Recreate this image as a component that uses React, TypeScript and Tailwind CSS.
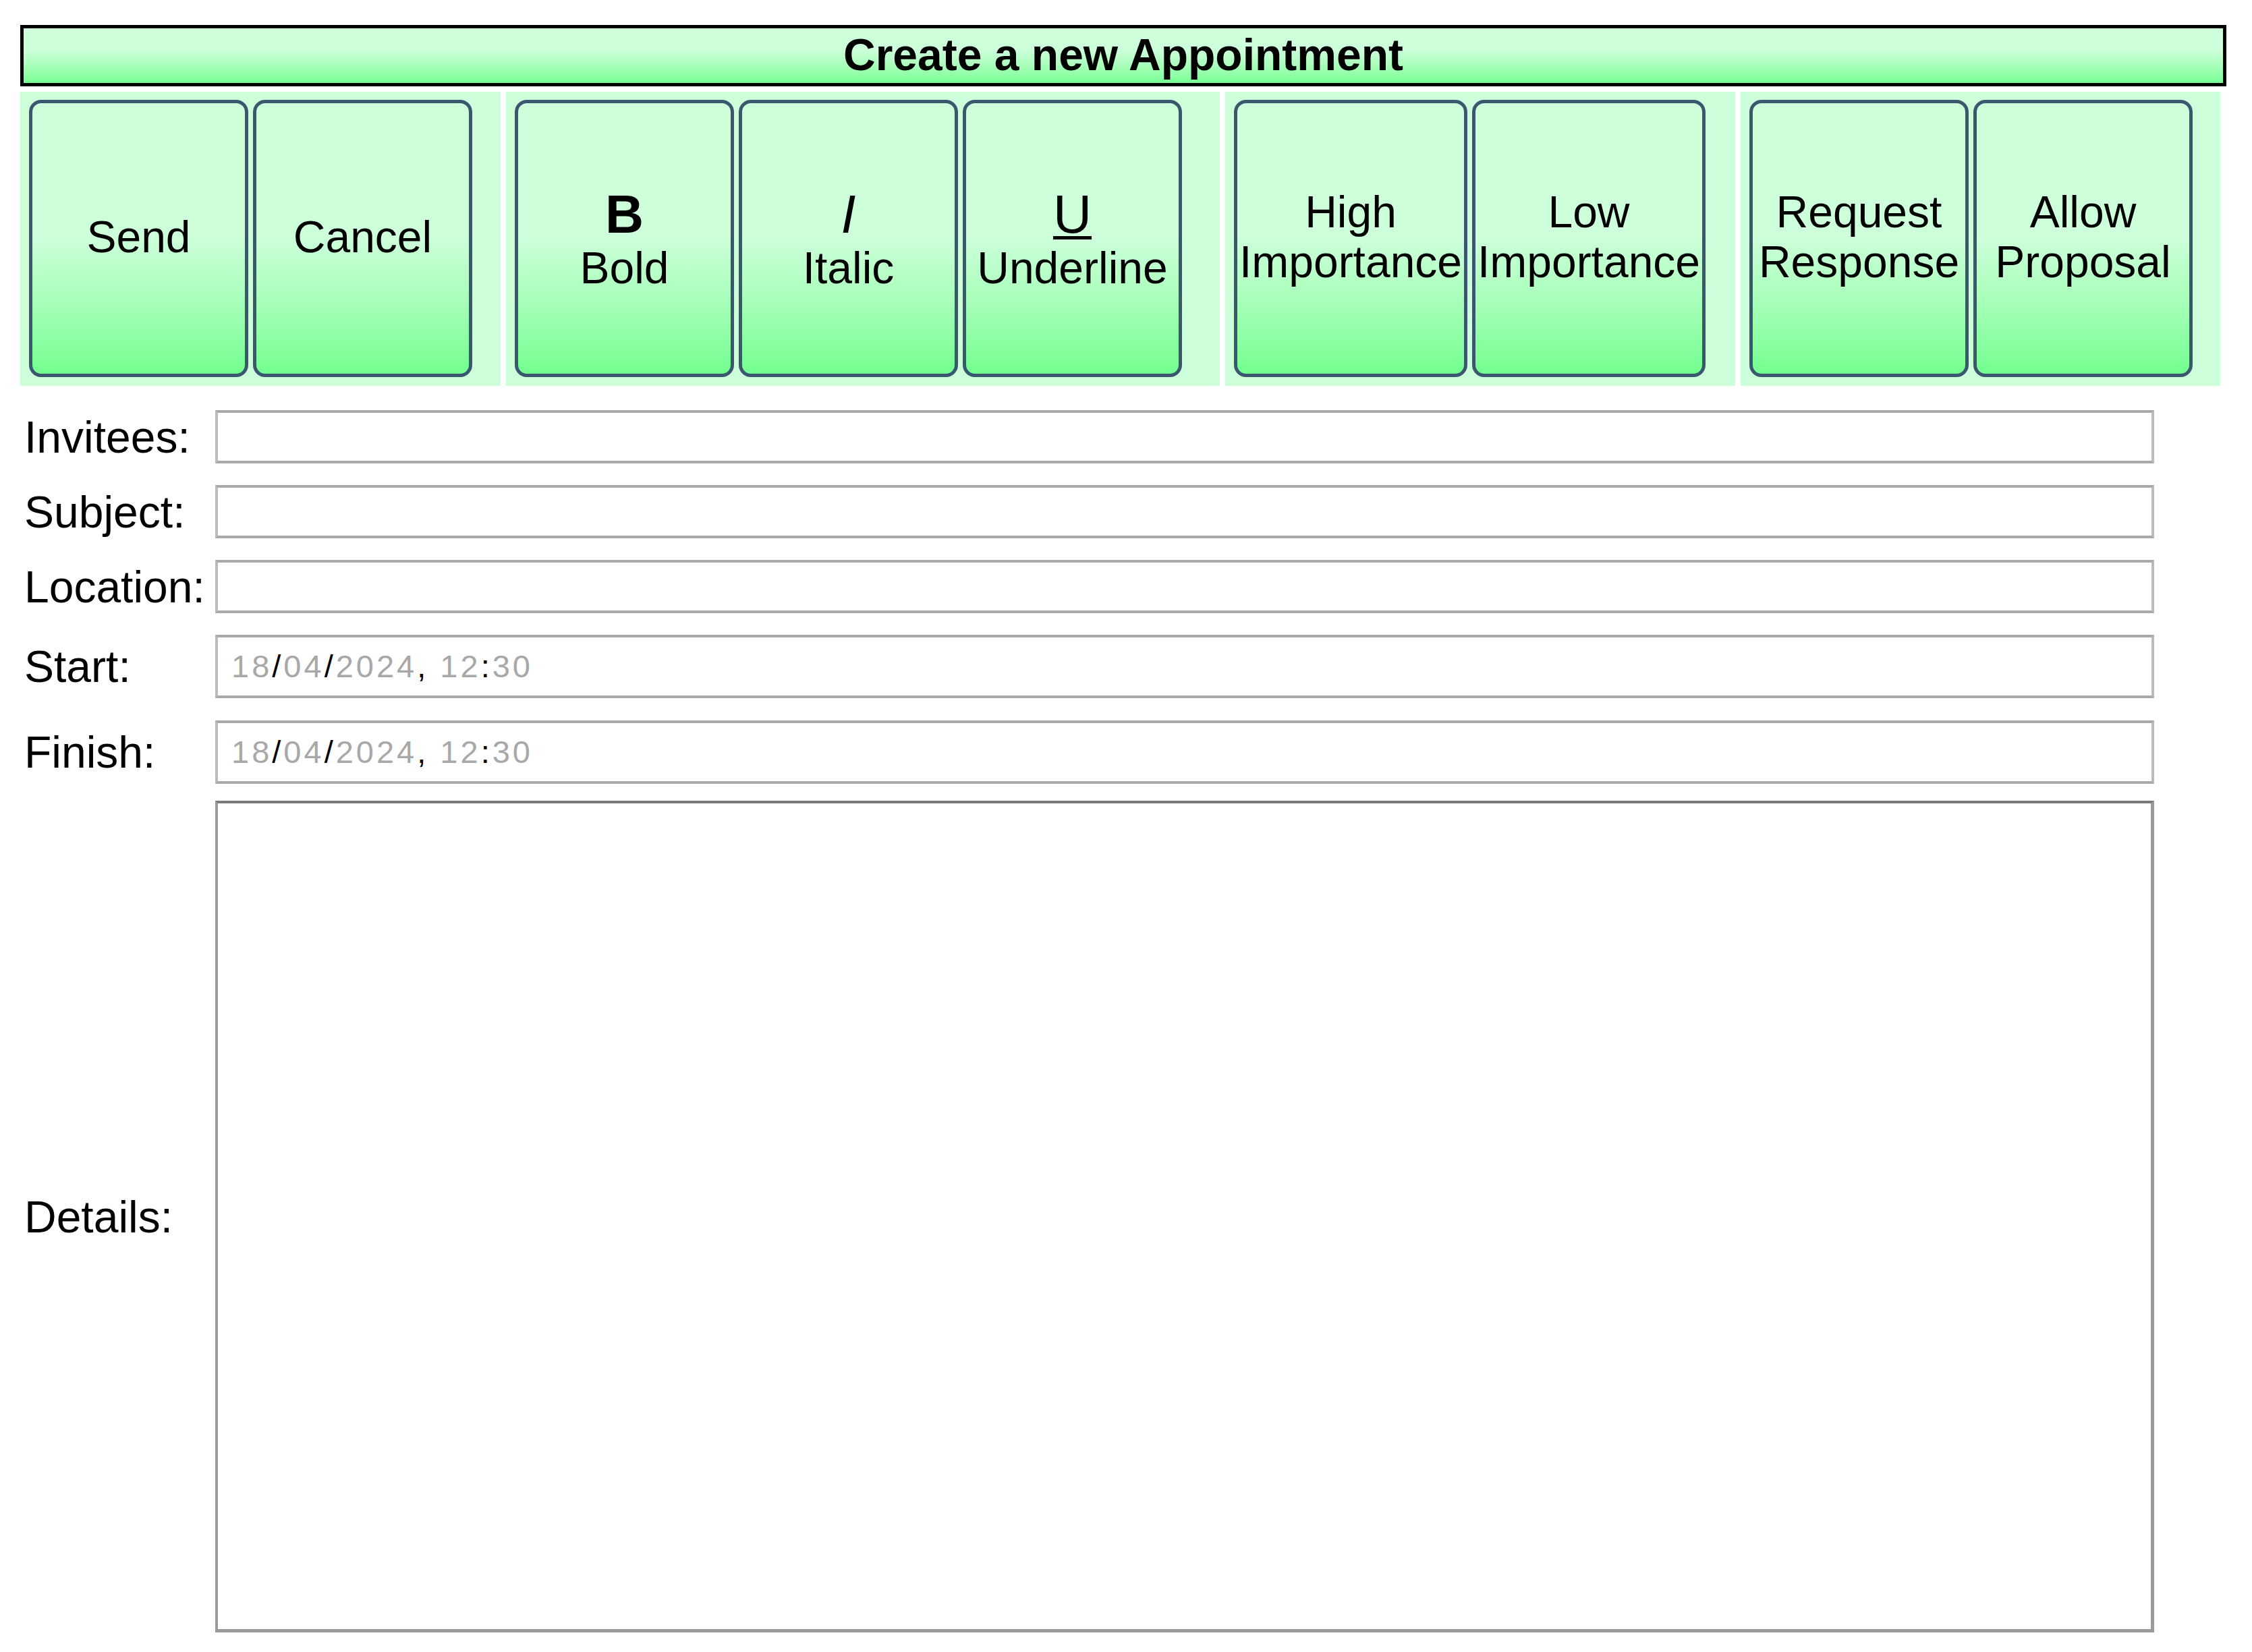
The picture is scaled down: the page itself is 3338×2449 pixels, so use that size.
import React from 'react';

type ToolButton = {
  lines: React.ReactNode[];
  icon?: React.ReactNode;
  wide?: boolean;
};

const groups: { width: string; buttons: ToolButton[] }[] = [
  {
    width: 'w-[712px]',
    buttons: [{ lines: ['Send'] }, { lines: ['Cancel'] }],
  },
  {
    width: 'w-[1058px]',
    buttons: [
      { icon: <span className="font-bold">B</span>, lines: ['Bold'] },
      { icon: <span className="italic">I</span>, lines: ['Italic'] },
      {
        icon: <span className="underline decoration-[5px] underline-offset-[5px]">U</span>,
        lines: ['Underline'],
      },
    ],
  },
  {
    width: 'w-[756px]',
    buttons: [
      { lines: ['High', 'Importance'], wide: true },
      { lines: ['Low', 'Importance'], wide: true },
    ],
  },
  {
    width: 'w-[711px]',
    buttons: [{ lines: ['Request', 'Response'] }, { lines: ['Allow', 'Proposal'] }],
  },
];

const ToolbarButton: React.FC<{ btn: ToolButton }> = ({ btn }) => (
  <button
    type="button"
    className={`${btn.wide ? 'w-[346px]' : 'w-[325px]'} ${btn.icon ? 'pt-[3px]' : 'pb-[5px]'} h-[411px] shrink-0 rounded-[18px] border-[5px] border-[#3b566f] bg-gradient-to-b from-[#ccffda] from-50% to-[#72ff90] flex flex-col items-center justify-center text-black text-[66px] leading-[74px] whitespace-nowrap`}
  >
    {btn.icon && <div className="text-[79px] leading-[84px]">{btn.icon}</div>}
    {btn.lines.map((line, i) => (
      <div key={i}>{line}</div>
    ))}
  </button>
);

const DateValue: React.FC = () => (
  <span className="text-[47px] tracking-[4px] text-[#a8a8a8]">
    18<span className="text-black">/</span>04<span className="text-black">/</span>2024
    <span className="text-black">,</span> 12<span className="text-black">:</span>30
  </span>
);

const Row: React.FC<{ label: string; className: string; children: React.ReactNode }> = ({
  label,
  className,
  children,
}) => (
  <div className={`flex items-center ${className}`}>
    <label className="w-[289px] shrink-0 pl-[6px] text-[66px] leading-[76px] text-black">
      {label}
    </label>
    {children}
  </div>
);

const fieldBorder = 'bg-white border-[4px] border-[#bcbcbc] border-t-[#a9a9a9] border-b-[#a9a9a9]';

export default function App() {
  return (
    <div className="min-h-screen bg-white pt-[37px] pl-[30px] font-['Liberation_Sans',Arial,Helvetica,sans-serif] text-black">
      <div className="w-[3270px] h-[91px] border-[5px] border-black bg-gradient-to-b from-[#ccffda] from-40% to-[#77ff94] flex items-center justify-center pb-[4px] text-[66px] font-bold leading-[76px]">
        Create a new Appointment
      </div>

      <div className="mt-[8px] flex gap-[8px]">
        {groups.map((g, gi) => (
          <div
            key={gi}
            className={`${g.width} h-[436px] bg-[#ccffda] pl-[13px] pt-[12px] flex items-start gap-[7px]`}
          >
            {g.buttons.map((b, bi) => (
              <ToolbarButton key={bi} btn={b} />
            ))}
          </div>
        ))}
      </div>

      <div className="flex flex-col">
        <Row label="Invitees:" className="mt-[36px]">
          <input type="text" className={`w-[2874px] h-[79px] outline-none px-[20px] text-[47px] ${fieldBorder}`} />
        </Row>
        <Row label="Subject:" className="mt-[32px]">
          <input type="text" className={`w-[2874px] h-[79px] outline-none px-[20px] text-[47px] ${fieldBorder}`} />
        </Row>
        <Row label="Location:" className="mt-[32px]">
          <input type="text" className={`w-[2874px] h-[79px] outline-none px-[20px] text-[47px] ${fieldBorder}`} />
        </Row>
        <Row label="Start:" className="mt-[32px]">
          <div className={`w-[2874px] h-[94px] pl-[20px] flex items-center ${fieldBorder}`}>
            <DateValue />
          </div>
        </Row>
        <Row label="Finish:" className="mt-[33px]">
          <div className={`w-[2874px] h-[94px] pl-[20px] flex items-center ${fieldBorder}`}>
            <DateValue />
          </div>
        </Row>
        <Row label="Details:" className="mt-[25px]">
          <textarea className="w-[2874px] h-[1233px] resize-none bg-white border-[4px] border-[#9a9a9a] border-t-[#7a7a7a] border-b-[5px] border-r-[5px] outline-none" />
        </Row>
      </div>
    </div>
  );
}
